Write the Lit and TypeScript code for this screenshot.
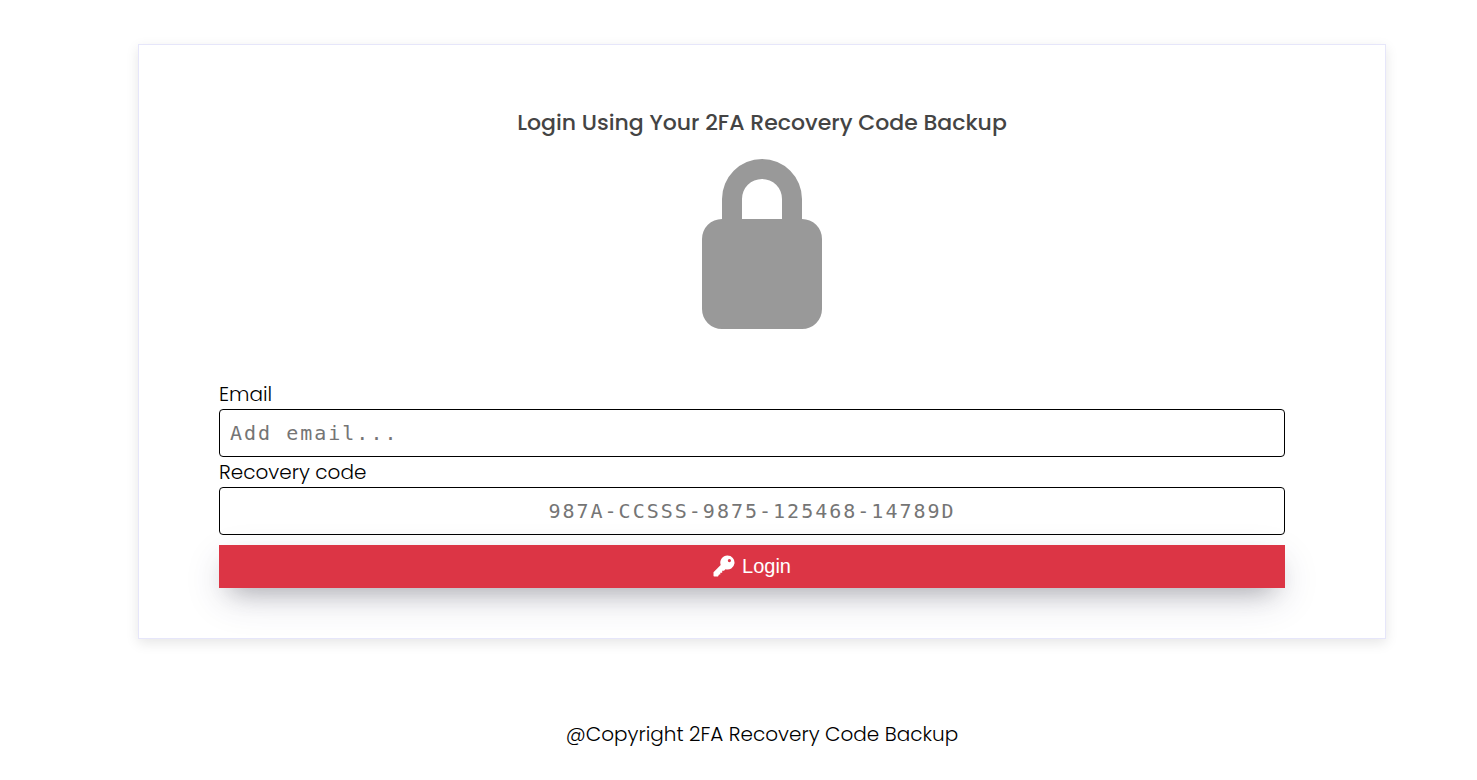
import { LitElement, html, css } from "lit";
import { customElement } from "lit/decorators.js";

@customElement("app-root")
export class AppRoot extends LitElement {
  static styles = css`
    :host {
      display: block;
      font-family: Poppins, Inter, "Open Sans", sans-serif;
      font-size: 20px;
      font-weight: 300;
      line-height: 30px;
      color: #000;
    }
    * { box-sizing: border-box; }
    .page {
      padding: 44px 91px 0 138px;
      text-align: center;
    }
    .card {
      padding: 60px 100px 50px 80px;
      border: 1px solid #e6e6fa;
      box-shadow: 0 4px 12px rgba(0, 0, 0, 0.1);
      background: #fff;
    }
    .head {
      display: flex;
      flex-direction: column;
      align-items: center;
      margin-right: -20px;
    }
    h1 {
      margin: 0;
      font-size: 22px;
      font-weight: 500;
      line-height: 36px;
      color: #444;
    }
    .lock {
      display: block;
      width: 120px;
      height: 170px;
      margin: 18px 0 50px;
      fill: #999;
    }
    form { display: flex; flex-direction: column; text-align: left; }
    label { display: block; line-height: 30px; }
    input {
      display: block;
      width: 100%;
      height: 48px;
      padding: 0 10px;
      border: 1px solid #000;
      border-radius: 4px;
      background: #fff;
      font: 20px/24px "DejaVu Sans Mono", monospace;
      letter-spacing: 2px;
    }
    input::placeholder { color: #757575; opacity: 1; }
    .code { text-align: center; }
    button {
      display: flex;
      align-items: center;
      justify-content: center;
      gap: 7px;
      height: 43px;
      margin-top: 10px;
      padding: 0 0 2px;
      border: 0;
      background: #dc3545;
      color: #fff;
      font: 20px/24px "Liberation Sans", Arial, sans-serif;
      box-shadow: 0 13px 40px -5px rgba(50, 50, 93, 0.2), 0 12px 26px -12px rgba(0, 0, 0, 0.35);
    }
    .key { width: 22px; height: 22px; fill: #fff; }
    footer { margin-top: 80px; }
  `;

  render() {
    return html`
      <div class="page">
        <main class="card">
          <div class="head">
            <h1>Login Using Your 2FA Recovery Code Backup</h1>
            <svg class="lock" viewBox="0 0 120 170" aria-hidden="true">
              <path d="M60 0a40 40 0 0 1 40 40v20a20 20 0 0 1 20 20v70a20 20 0 0 1-20 20H20a20 20 0 0 1-20-20V80a20 20 0 0 1 20-20V40A40 40 0 0 1 60 0zm20 60V40a20 20 0 0 0-40 0v20z" fill-rule="evenodd" />
            </svg>
          </div>
          <form>
            <label for="email">Email</label>
            <input id="email" type="email" placeholder="Add email..." />
            <label for="code">Recovery code</label>
            <input id="code" class="code" type="text" placeholder="987A-CCSSS-9875-125468-14789D" />
            <button type="button">
              <svg class="key" viewBox="0 0 22 22" aria-hidden="true">
                <path d="M14.5 0.5a7 7 0 1 1-2 13.7L11 15.8H9.2v1.9H7.3v1.8H6L5 21.5H1.2Q0.5 21.5 0.5 20.8V17.2L7.7 9.9A7 7 0 0 1 14.5 0.5zM16.4 4a1.6 1.6 0 1 0 0 3.2 1.6 1.6 0 0 0 0-3.2z" fill-rule="evenodd" />
              </svg>
              <span>Login</span>
            </button>
          </form>
        </main>
        <footer>@Copyright 2FA Recovery Code Backup</footer>
      </div>
    `;
  }
}
